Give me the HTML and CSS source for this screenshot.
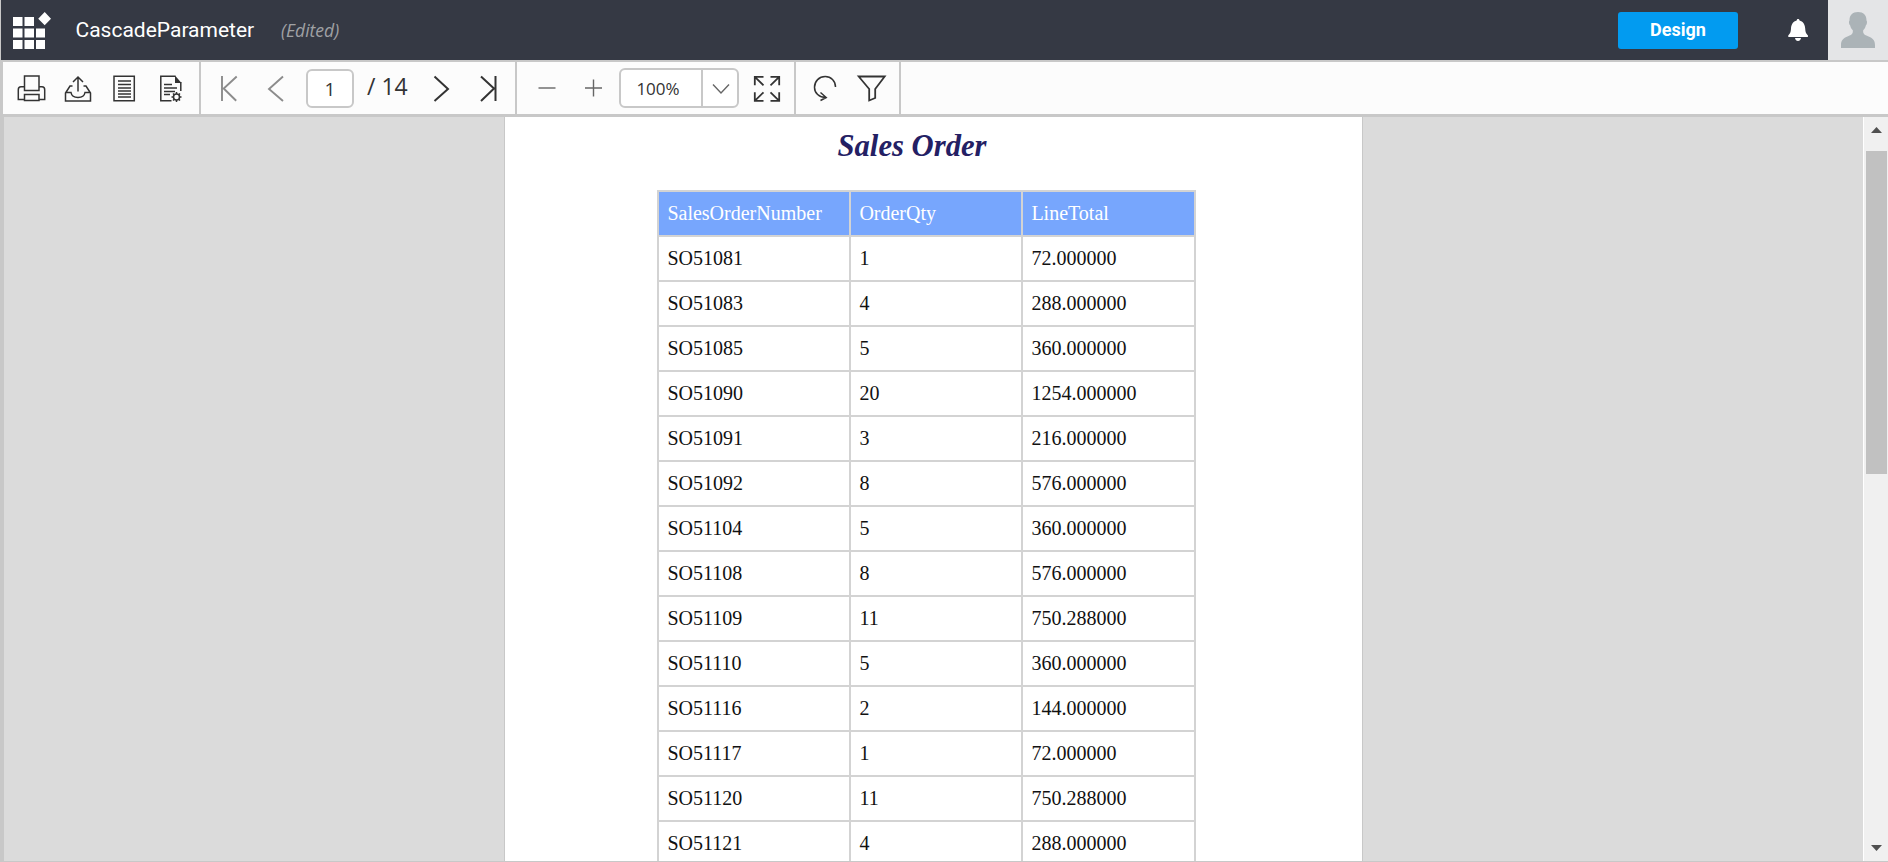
FILE: index.html
```html
<!DOCTYPE html>
<html lang="en">
<head>
<meta charset="utf-8">
<title>CascadeParameter</title>
<link rel="stylesheet" href="styles.css">
</head>
<body>
<div class="app">
  <header class="header">
    <svg class="logo" width="60" height="60" viewBox="0 0 60 60"><path d="M13 17h9.5v9H13zM24.5 17H34v9h-9.5zM13 28.5h9.5v9H13zM24.5 28.5H34v9h-9.5zM36 28.5h9v9h-9zM13 40h9.5v9H13zM24.5 40H34v9h-9.5zM36 40h9v9h-9zM44.7 12l6.3 6.700-6.300 6.500-6.500-6.500z"/></svg>
    <h1 class="title">CascadeParameter</h1>
    <span class="state">(Edited)</span>
    <button class="design">Design</button>
    <svg class="bell" width="90" height="60" viewBox="1738 0 90 60"><path d="M1798 19c1 0 1.500.7 1.500 1.600 3.500.8 5.500 4 5.700 8 .2 4 1 5.200 2.700 6.700V37h-19.600v-1.700c1.700-1.500 2.500-2.700 2.700-6.700.2-4 2.200-7.200 5.700-8 0-.9.4-1.600 1.300-1.600zM1795 38h6c-.3 1.700-1.500 3-3 3s-2.700-1.300-3-3z"/></svg>
    <svg class="avatar" width="60" height="60" viewBox="1828 0 60 60"><path d="M1858 12c5.500 0 8.500 3 8.500 8.500 1 1 .5 4-.7 5-.4 2-1.300 3.500-2.600 4.700-.5 4 1.800 4.800 4.800 6 5 2 7 4 7 9V48h-34v-2.800c0-5 2-7 7-9 3-1.200 5.300-2 4.800-6-1.300-1.200-2.200-2.700-2.600-4.700-1.200-1-1.700-4-.7-5 0-5.500 3-8.500 8.500-8.500z"/></svg>
  </header>

  <nav class="toolbar">
    <div class="group docs">
      <svg class="ico" width="47" height="52" viewBox="8 62 47 52"><path d="M24.500 76h14.500v14.500h-14.500zM24.500 94.500h14.500v6h-14.500zM24.500 86.700h-3.500q-2.700 0-2.700 3V99.500h6M39 86.700h3q2.700 0 2.700 3V99.500h-5.700"/></svg>
      <svg class="ico" width="46" height="52" viewBox="55 62 46 52"><path d="M78 77v14.500M73 82l5-5 5 5M72.500 86h-2.500l-4.500 7v8h25v-8l-4.500-7h-2.500M65.500 92.500h5.500c.5 3 3 5 7 5s6.500-2 7-5h5.500"/></svg>
      <svg class="ico" width="47" height="52" viewBox="101 62 47 52"><path d="M114 76.200h20.300v24.600h-20.300z"/><path d="M118 81h13M118 84.500h13M118 88h13M118 91h13M118 94h13M118 97h13"/></svg>
      <svg class="ico" width="46" height="52" viewBox="148 62 46 52"><path d="M171.500 100.800h-10.700v-24.600h14.700M180.800 82v9M164 84.500h8M164 88h13M164 91.500h11M164 94.500h6"/><path class="solid" d="M175 75.500l6.500 7.500h-6.500z"/><circle cx="176.500" cy="97" r="3"/><path d="M176.500 92v2M176.500 100v2M171.500 97h2M179.500 97h2M173 93.500l1.400 1.400M178.600 99.100l1.400 1.400M180 93.500l-1.400 1.400M174.400 99.100l-1.400 1.400"/></svg>
    </div>
    <div class="group pages">
      <svg class="ico muted" width="47" height="52" viewBox="206 62 47 52"><path d="M222 76v25M236.700 76.500l-13 12 12.500 12.300"/></svg>
      <svg class="ico muted" width="47" height="52" viewBox="253 62 47 52"><path d="M283 76.500l-14 12.500 14 12"/></svg>
      <span class="page-no">1</span>
      <span class="page-total">/ 14</span>
      <svg class="ico strong" width="47" height="52" viewBox="418 62 47 52"><path d="M434.500 76.500l13.500 12.500-13.500 12"/></svg>
      <svg class="ico strong" width="46" height="52" viewBox="465 62 46 52"><path d="M481 76.500l13 12-13 12.500M495.500 76v25"/></svg>
    </div>
    <div class="group zoom">
      <svg class="ico thin" width="47" height="52" viewBox="524 62 47 52"><path d="M538.500 88h17"/></svg>
      <svg class="ico thin" width="48" height="52" viewBox="571 62 48 52"><path d="M585 88h17M593.500 79.500v17"/></svg>
      <div class="combo"><span class="combo-value">100%</span><svg class="ico thin" width="34" height="36" viewBox="703 70 34 36"><path d="M713 84.500l8 8.500 8-8.500"/></svg></div>
      <svg class="ico expand" width="55" height="52" viewBox="739 62 55 52"><path d="M763.500 76.800h-8.700v8.500M754.800 76.800l8.700 8.500M770.500 76.800h8.700v8.500M779.200 76.800l-8.700 8.500M763.500 100.800h-8.700v-8.500M754.800 100.800l8.700-8.500M770.500 100.800h8.700v-8.500M779.200 100.800l-8.700-8.500"/></svg>
    </div>
    <div class="group actions">
      <svg class="ico" width="47" height="52" viewBox="802 62 47 52"><path d="M835.500 87c0-6.200-4.500-10.500-10.300-10.500-6 0-10.700 4.700-10.700 10.700 0 5.800 4.500 10.300 11.500 10.300M820.500 92.500l5.700 5-5.700 3"/></svg>
      <svg class="ico" width="47" height="52" viewBox="849 62 47 52"><path class="funnel" d="M858.700 76.500h26l-9.500 12.500v9l-6 2.500v-11.500z"/></svg>
    </div>
  </nav>

  <main class="viewer">
    <div class="canvas">
      <article class="report">
        <h2 class="report-title">Sales Order</h2>
        <table class="orders">
          <thead><tr><th class="c1">SalesOrderNumber</th><th class="c2">OrderQty</th><th class="c3">LineTotal</th></tr></thead>
          <tbody>
            <tr><td>SO51081</td><td>1</td><td>72.000000</td></tr>
            <tr><td>SO51083</td><td>4</td><td>288.000000</td></tr>
            <tr><td>SO51085</td><td>5</td><td>360.000000</td></tr>
            <tr><td>SO51090</td><td>20</td><td>1254.000000</td></tr>
            <tr><td>SO51091</td><td>3</td><td>216.000000</td></tr>
            <tr><td>SO51092</td><td>8</td><td>576.000000</td></tr>
            <tr><td>SO51104</td><td>5</td><td>360.000000</td></tr>
            <tr><td>SO51108</td><td>8</td><td>576.000000</td></tr>
            <tr><td>SO51109</td><td>11</td><td>750.288000</td></tr>
            <tr><td>SO51110</td><td>5</td><td>360.000000</td></tr>
            <tr><td>SO51116</td><td>2</td><td>144.000000</td></tr>
            <tr><td>SO51117</td><td>1</td><td>72.000000</td></tr>
            <tr><td>SO51120</td><td>11</td><td>750.288000</td></tr>
            <tr><td>SO51121</td><td>4</td><td>288.000000</td></tr>
          </tbody>
        </table>
      </article>
    </div>
    <div class="scrollbar">
      <svg width="24" height="34" viewBox="1864 117 24 34"><path d="M1871 133l5.500-6 5.500 6z"/></svg>
      <div class="thumb"></div>
      <svg class="down" width="24" height="26" viewBox="1864 835 24 26"><path d="M1871 845h11l-5.500 6z"/></svg>
    </div>
  </main>
</div>
</body>
</html>
```

FILE: styles.css
```css
* { box-sizing: border-box; }
body { margin: 0; }
.app {
  width: 1888px;
  height: 862px;
  display: flex;
  flex-direction: column;
  overflow: hidden;
  background: #c8c8c8;
}
svg { display: block; flex: none; }

.header {
  height: 60px;
  flex: none;
  margin-left: 1px;
  display: flex;
  align-items: center;
  background: #353944;
  color: #fff;
}
.logo { margin-left: -1px; fill: #fff; }
.title {
  margin: 0 0 0 15.5px;
  width: 205.5px;
  font: 400 21px/60px Roboto, sans-serif;
  white-space: nowrap;
}
.state {
  font: italic 17.5px/62px "Open Sans", sans-serif;
  color: #a0a1a4;
}
.design {
  margin: 0 0 0 auto;
  width: 120px;
  height: 37px;
  border: 0;
  border-radius: 3px;
  padding: 0 0 2px;
  background: #029bf0;
  color: #fff;
  font: 700 18px/35px Roboto, sans-serif;
}
.bell { fill: #fff; }
.avatar { background: #e4e5e7; fill: #abb3b7; }

.toolbar {
  height: 52px;
  flex: none;
  margin: 2px 0 3px 3px;
  display: flex;
  background: #fcfcfc;
  color: #333;
}
.group {
  display: flex;
  align-items: center;
  border-right: 2px solid #c8c8c8;
}
.docs { width: 198px; padding-left: 5px; }
.pages { width: 316px; padding-left: 5px; }
.zoom { width: 279px; padding-left: 7px; }
.actions { width: 105px; padding-left: 6px; }
.ico { fill: none; stroke: #333; stroke-width: 1.5; }
.ico .solid { fill: #333; stroke: none; }
.ico .funnel { stroke-width: 1.8; }
.muted { stroke: #8c8c8c; stroke-width: 1.9; }
.strong { stroke-width: 2; }
.thin { stroke: #666; stroke-width: 1.4; }
.expand { stroke-width: 1.8; }
.page-no {
  width: 48px;
  height: 39px;
  margin-left: 6px;
  border: 2px solid #c8c8c8;
  border-radius: 6px;
  background: #fff;
  text-align: center;
  font: 19px/36px "Open Sans", sans-serif;
}
.page-total {
  width: 64px;
  height: 52px;
  padding-left: 13px;
  font: 23px/49px "Open Sans", sans-serif;
  white-space: nowrap;
}
.combo {
  width: 120px;
  height: 40px;
  display: flex;
  border: 2px solid #c8c8c8;
  border-radius: 6px;
  background: #fff;
  overflow: hidden;
}
.combo-value {
  width: 82px;
  padding-right: 6px;
  border-right: 2px solid #c8c8c8;
  text-align: center;
  font: 17px/37px "Open Sans", sans-serif;
}

.viewer { height: 744px; flex: none; margin-left: 4px; display: flex; }
.canvas {
  flex: 1;
  display: flex;
  padding-left: 500px;
  background: #dbdbdb;
  overflow: hidden;
}
.report {
  width: 859px;
  height: 744px;
  padding-left: 152px;
  border: solid #c8c8c8;
  border-width: 0 1px;
  background: #fff;
  font-family: "Liberation Serif", serif;
  overflow: hidden;
}
.report-title {
  margin: 0;
  height: 73px;
  width: 510px;
  text-align: center;
  color: #242064;
  font-size: 30.67px;
  font-style: italic;
  font-weight: 700;
  line-height: 58px;
}
.orders {
  width: 539px;
  table-layout: fixed;
  border-collapse: separate;
  border-spacing: 2px;
  background: #d3d3d3;
  font-size: 20px;
  line-height: 43px;
}
.orders th, .orders td { height: 43px; padding: 0 0 0 8.4px; text-align: left; }
.orders th { background: #77a6fd; color: #fff; font-weight: 400; }
.orders td { background: #fff; color: #111; }
.c1 { width: 190px; }
.c2 { width: 170px; }
.c3 { width: 171px; }

.scrollbar {
  width: 25px;
  flex: none;
  display: flex;
  flex-direction: column;
  border-left: 1px solid #fff;
  background: #f0f0f0;
}
.scrollbar svg { fill: #505050; }
.thumb { height: 323px; margin: 0 1px 0 2px; background: #c1c1c1; }
.down { margin-top: auto; }
```
